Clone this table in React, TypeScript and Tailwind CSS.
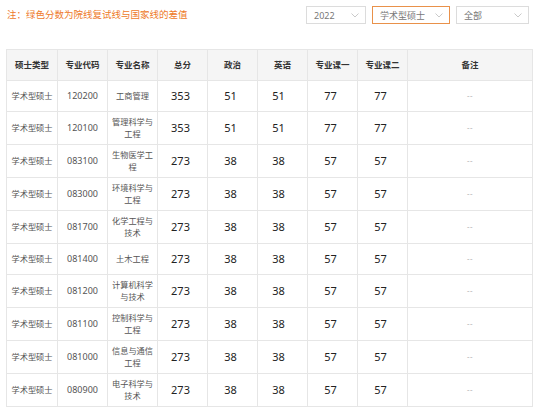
import { useState } from "react";

type Row = {
    type: string;
    code: string;
    name: string[];
    total: number;
    politics: number;
    english: number;
    course1: number;
    course2: number;
};

const rows: Row[] = [
    { type: "学术型硕士", code: "120200", name: ["工商管理"], total: 353, politics: 51, english: 51, course1: 77, course2: 77 },
    { type: "学术型硕士", code: "120100", name: ["管理科学与", "工程"], total: 353, politics: 51, english: 51, course1: 77, course2: 77 },
    { type: "学术型硕士", code: "083100", name: ["生物医学工", "程"], total: 273, politics: 38, english: 38, course1: 57, course2: 57 },
    { type: "学术型硕士", code: "083000", name: ["环境科学与", "工程"], total: 273, politics: 38, english: 38, course1: 57, course2: 57 },
    { type: "学术型硕士", code: "081700", name: ["化学工程与", "技术"], total: 273, politics: 38, english: 38, course1: 57, course2: 57 },
    { type: "学术型硕士", code: "081400", name: ["土木工程"], total: 273, politics: 38, english: 38, course1: 57, course2: 57 },
    { type: "学术型硕士", code: "081200", name: ["计算机科学", "与技术"], total: 273, politics: 38, english: 38, course1: 57, course2: 57 },
    { type: "学术型硕士", code: "081100", name: ["控制科学与", "工程"], total: 273, politics: 38, english: 38, course1: 57, course2: 57 },
    { type: "学术型硕士", code: "081000", name: ["信息与通信", "工程"], total: 273, politics: 38, english: 38, course1: 57, course2: 57 },
    { type: "学术型硕士", code: "080900", name: ["电子科学与", "技术"], total: 273, politics: 38, english: 38, course1: 57, course2: 57 },
];

const headers = ["硕士类型", "专业代码", "专业名称", "总分", "政治", "英语", "专业课一", "专业课二", "备注"];

function Chevron() {
    return (
        <svg width="8" height="5" viewBox="0 0 8 5" fill="none">
            <path d="M0.5 0.5 L4 4 L7.5 0.5" stroke="#c4c4c4" strokeWidth="0.9" />
        </svg>
    );
}

function Select({ value, width, active }: { value: string; width: string; active?: boolean }) {
    return (
        <div
            className={`flex h-[18px] items-center justify-between pl-[7px] pr-[6px] border ${width} ${
                active ? "border-[#e9914a]" : "border-[#dcdcdc]"
            }`}
        >
            <span className="text-[9px] text-[#777] leading-none">{value}</span>
            <Chevron />
        </div>
    );
}

export default function App() {
    const [year] = useState("2022");

    return (
        <div className="w-[538px] h-[408px] bg-white overflow-hidden px-[6px] pt-[6px]" style={{ fontFamily: '"Noto Sans", "Noto Sans CJK SC", sans-serif' }}>
            <div className="flex items-center justify-between pr-[3px]">
                <p className="pl-[1px] text-[9.5px] text-[#ee7a2a] leading-none">注：绿色分数为院线复试线与国家线的差值</p>
                <div className="flex gap-[6px]">
                    <Select value={year} width="w-[60px]" />
                    <Select value="学术型硕士" width="w-[78px]" active />
                    <Select value="全部" width="w-[73px]" />
                </div>
            </div>

            <table className="mt-[25px] w-[526px] table-fixed border-collapse border border-[#e6e6e6]">
                <colgroup>
                    <col className="w-[51px]" />
                    <col className="w-[50px]" />
                    <col className="w-[50px]" />
                    <col className="w-[50px]" />
                    <col className="w-[50px]" />
                    <col className="w-[50px]" />
                    <col className="w-[50px]" />
                    <col className="w-[50px]" />
                    <col className="w-[125px]" />
                </colgroup>
                <thead className="bg-[#f5f5f5]">
                    <tr className="h-[31px]">
                        {headers.map((h) => (
                            <th key={h} className="border border-[#e6e6e6] p-0 text-center text-[8.5px] font-bold text-[#333]">
                                {h}
                            </th>
                        ))}
                    </tr>
                </thead>
                <tbody>
                    {rows.map((r) => (
                        <tr key={r.code} className={r.name.length > 1 ? "h-[33px]" : "h-[31px]"}>
                            <td className="border border-[#e6e6e6] p-0 text-center text-[8.2px] text-[#555]">{r.type}</td>
                            <td className="border border-[#e6e6e6] p-0 text-center text-[9px] text-[#555]">{r.code}</td>
                            <td className="border border-[#e6e6e6] p-0 text-center text-[8.2px] leading-[12px] text-[#555]">
                                {r.name.map((n) => (
                                    <div key={n}>{n}</div>
                                ))}
                            </td>
                            <td className="border border-[#e6e6e6] p-0 pr-[4px] text-center text-[11px] text-[#222]">{r.total}</td>
                            <td className="border border-[#e6e6e6] p-0 pr-[4px] text-center text-[11px] text-[#222]">{r.politics}</td>
                            <td className="border border-[#e6e6e6] p-0 pr-[8px] text-center text-[11px] text-[#222]">{r.english}</td>
                            <td className="border border-[#e6e6e6] p-0 pr-[4px] text-center text-[11px] text-[#222]">{r.course1}</td>
                            <td className="border border-[#e6e6e6] p-0 pr-[4px] text-center text-[11px] text-[#222]">{r.course2}</td>
                            <td className="border border-[#e6e6e6] p-0 text-center text-[8px] tracking-[0.5px] text-[#bbb]">--</td>
                        </tr>
                    ))}
                </tbody>
            </table>
        </div>
    );
}
